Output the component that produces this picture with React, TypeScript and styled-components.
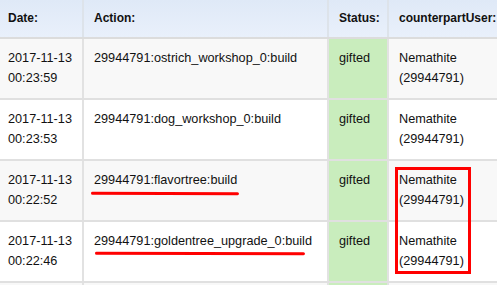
import React from "react";
import styled, { createGlobalStyle } from "styled-components";

const Global = createGlobalStyle`
  html, body { margin: 0; padding: 0; background: #fff; overflow: hidden; }
  body { font-family: "Liberation Sans", Arial, sans-serif; font-size: 12.7px; color: #111; }
`;

const Wrap = styled.div`
  position: relative;
  width: 497px;
  height: 285px;
  overflow: hidden;
`;

const Table = styled.table`
  border-collapse: collapse;
  table-layout: fixed;
  width: 560px;
`;

const Th = styled.th<{ $w: number; $first?: boolean }>`
  width: ${(p) => p.$w}px;
  height: 38px;
  box-sizing: border-box;
  padding: 0 10px 1px ${(p) => (p.$first ? 8 : 10)}px;
  text-align: left;
  font-weight: bold;
  font-size: 12px;
  color: #111;
  background: linear-gradient(#dfe9f7, #e9f0fb);
  border-right: 2px solid #dde3ea;
  border-bottom: 2px solid #dcdcdc;
  white-space: nowrap;
`;

const Row = styled.tr<{ $odd: boolean }>`
  background: ${(p) => (p.$odd ? "#f8f8f8" : "#ffffff")};
`;

const Td = styled.td<{ $first?: boolean; $status?: boolean }>`
  box-sizing: border-box;
  height: 61px;
  padding: 9px 10px 10px ${(p) => (p.$first ? 8 : 10)}px;
  vertical-align: top;
  line-height: 20px;
  border-right: 2px solid #e2e2e2;
  border-bottom: 2px solid #e0e0e0;
  background: ${(p) => (p.$status ? "#c9edbd" : "transparent")};
  white-space: nowrap;
`;

const Underline = styled.div`
  position: absolute;
  height: 3px;
  background: #f00;
  border-radius: 2px;
`;

const RedBox = styled.div`
  position: absolute;
  left: 395px;
  top: 167px;
  width: 76px;
  height: 107px;
  box-sizing: border-box;
  border: 3px solid #f00;
`;

const rows = [
  { date: "2017-11-13", time: "00:23:59", action: "29944791:ostrich_workshop_0:build" },
  { date: "2017-11-13", time: "00:23:53", action: "29944791:dog_workshop_0:build" },
  { date: "2017-11-13", time: "00:22:52", action: "29944791:flavortree:build" },
  { date: "2017-11-13", time: "00:22:46", action: "29944791:goldentree_upgrade_0:build" },
];

export default function App() {
  return (
    <Wrap>
      <Global />
      <Table>
        <thead>
          <tr>
            <Th $w={83} $first>Date:</Th>
            <Th $w={245}>Action:</Th>
            <Th $w={60}>Status:</Th>
            <Th $w={172}>counterpartUser:</Th>
          </tr>
        </thead>
        <tbody>
          {rows.map((r, i) => (
            <Row key={i} $odd={i % 2 === 0}>
              <Td $first>
                {r.date}
                <br />
                {r.time}
              </Td>
              <Td>{r.action}</Td>
              <Td $status>gifted</Td>
              <Td>
                Nemathite
                <br />
                (29944791)
              </Td>
            </Row>
          ))}
          <Row $odd>
            <Td $first />
            <Td />
            <Td $status />
            <Td />
          </Row>
        </tbody>
      </Table>
      <Underline style={{ left: 91, top: 192, width: 148, transform: "rotate(0.2deg)" }} />
      <Underline style={{ left: 95, top: 252, width: 210, transform: "rotate(0.15deg)" }} />
      <RedBox />
    </Wrap>
  );
}
